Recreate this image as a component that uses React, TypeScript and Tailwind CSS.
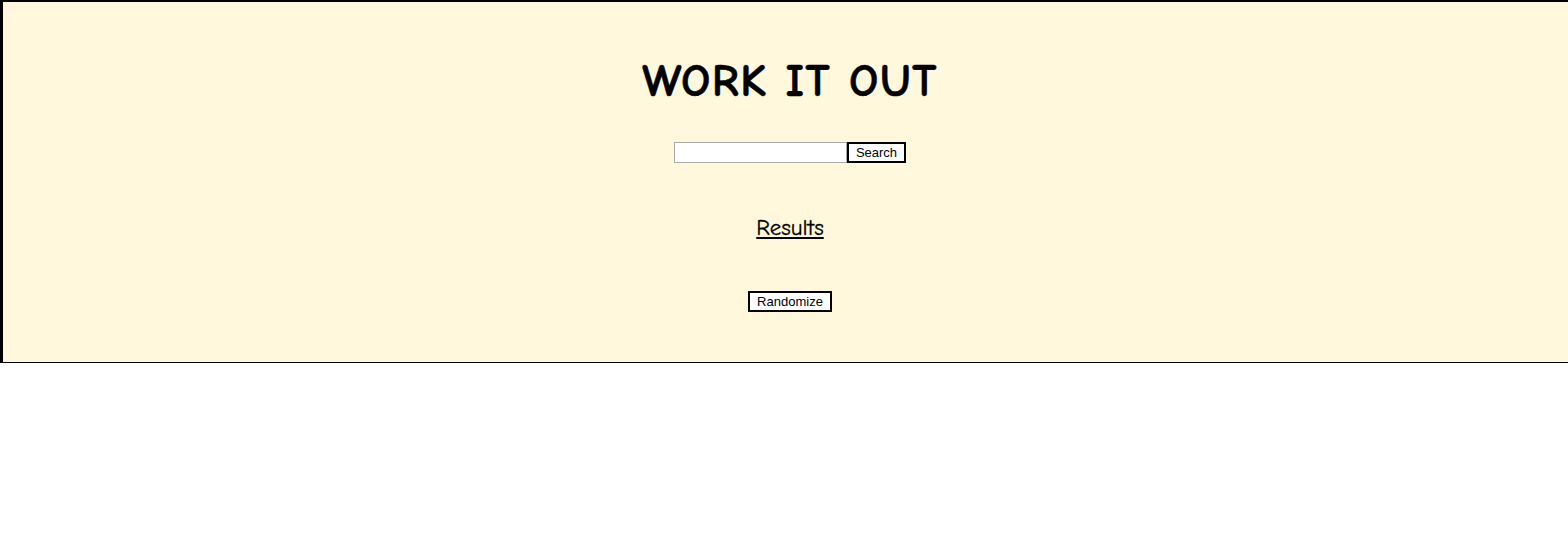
export default function App() {
  return (
    <div className="w-full overflow-hidden bg-white" style={{ height: 540 }}>
      <div className="bg-[#fff8dc] border-l-[3px] border-t-2 border-b border-black h-[363px] flex flex-col items-center pl-[9px]">
        <h1 className="mt-[53px] text-[46px] leading-[54px] font-bold text-black tracking-[1.5px] [-webkit-text-stroke:0.6px_black] [font-family:'Comic_Sans_MS','Comic_Neue','Open_Sans',sans-serif]">
          WORK IT OUT
        </h1>
        <div className="mt-[33px] flex items-center">
          <input
            type="text"
            className="w-[173px] h-[21px] bg-white border border-[#a9a9a9] outline-none px-1 text-[13px]"
          />
          <button className="h-[21px] w-[59px] bg-white border-2 border-black text-[13px] leading-none text-black [font-family:'Liberation_Sans',Arial,sans-serif]">
            Search
          </button>
        </div>
        <div className="mt-[51px] text-[23px] leading-[28px] underline text-black [-webkit-text-stroke:0.3px_black] [font-family:'Comic_Sans_MS','Comic_Neue','Open_Sans',sans-serif]">
          Results
        </div>
        <button className="mt-[49px] h-[21px] w-[84px] bg-white border-2 border-black text-[13px] leading-none text-black [font-family:'Liberation_Sans',Arial,sans-serif]">
          Randomize
        </button>
      </div>
    </div>
  );
}
